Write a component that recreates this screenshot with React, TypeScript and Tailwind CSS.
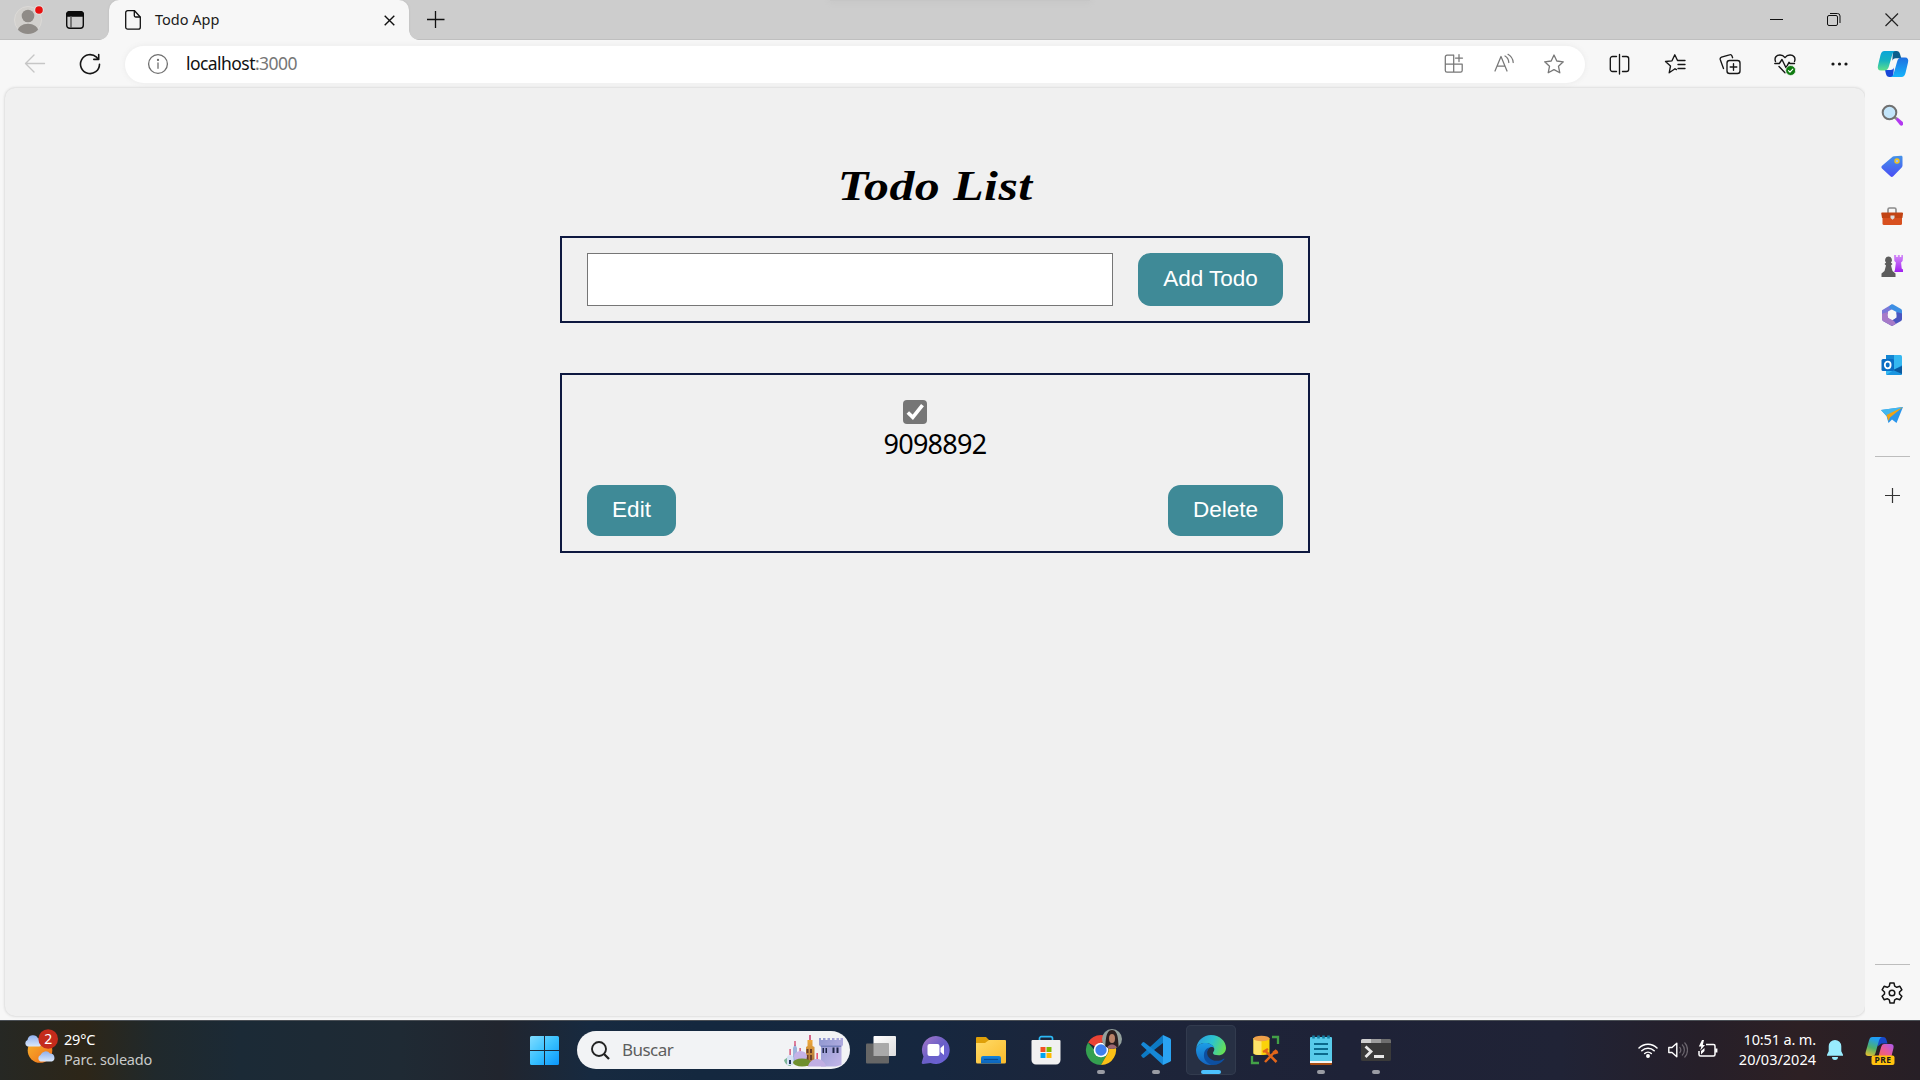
import { useState, type ReactNode } from "react";

const UI = "font-['Noto_Sans','Open_Sans',sans-serif]";

/* ---------- Title bar ---------- */

function TitleBar() {
  return (
    <header className="relative flex h-10 shrink-0 bg-[#cdcdcd] shadow-[inset_0_-1px_0_#bfbfbf]">
      <div className="absolute left-[830px] top-0 h-px w-[260px] bg-[#c6c6c6] shadow-[0_1px_5px_1px_#c5c5c5]" />
      <svg className="ml-[14px] mt-[4px] h-8 w-8" viewBox="0 0 32 32">
        <defs>
          <clipPath id="avatar">
            <circle cx="14" cy="16" r="14" />
          </clipPath>
        </defs>
        <circle cx="14" cy="16" r="13.5" fill="#d2d0cd" stroke="#dcdad7" />
        <g clipPath="url(#avatar)" fill="#8f8b87">
          <circle cx="14" cy="12" r="6.3" />
          <ellipse cx="14" cy="27" rx="10.5" ry="7.2" />
        </g>
        <circle cx="25" cy="6" r="4.8" fill="#e4dedc" />
        <circle cx="25" cy="6" r="3.8" fill="#e81010" />
      </svg>
      <svg className="ml-5 mt-[11px] h-[18px] w-[18px]" viewBox="0 0 18 18" fill="none" stroke="#0c0c0c" strokeWidth="1.4">
        <rect x=".7" y=".7" width="16.6" height="16.6" rx="3" />
        <path d="M.7 5V3.4A2.7 2.7 0 0 1 3.4.7h11.2a2.7 2.7 0 0 1 2.7 2.7V5z" fill="#0c0c0c" />
        <path d="M5 5v12" stroke="#555" />
      </svg>
      <div className="relative ml-[25px] flex w-[300px] rounded-t-[10px] bg-[#f7f7f7] shadow-[0_0_2px_#b5b5b5] [clip-path:inset(-2px_-12px_0_-12px)]">
        <span className="absolute -left-[10px] bottom-0 size-[10px] bg-[radial-gradient(circle_at_0_0,transparent_9.5px,#f7f7f7_10.2px)]" />
        <span className="absolute -right-[10px] bottom-0 size-[10px] bg-[radial-gradient(circle_at_100%_0,transparent_9.5px,#f7f7f7_10.2px)]" />
        <svg className="ml-4 mt-[10px] h-5 w-4" viewBox="0 0 16 20" fill="none" stroke="#111" strokeWidth="1.3">
          <path d="M2.7.7h6.8L15.3 7v10.2a2 2 0 0 1-2 2H2.7a2 2 0 0 1-2-2V2.7a2 2 0 0 1 2-2z" />
          <path d="M9.3.7V5.500a1.500 1.500 0 0 0 1.500 1.500h4.500" />
        </svg>
        <span className={`${UI} ml-[14px] mt-[9px] text-[14.5px] leading-[21px] text-[#1b1b1b]`}>Todo App</span>
        <svg className="ml-auto mr-[14px] mt-[15px] h-[11px] w-[11px]" viewBox="0 0 11 11" stroke="#111" strokeWidth="1.4">
          <path d="M.7.7l9.600 9.600M10.300.7.7 10.300" />
        </svg>
      </div>
      <svg className="ml-[18px] mt-[11px] h-[18px] w-[18px]" viewBox="0 0 18 18" stroke="#111" strokeWidth="1.3">
        <path d="M8.500 0v17M0 8.500h17.500" />
      </svg>
      <div className="ml-auto mr-[21px] mt-[13px] flex gap-[44px]">
        <svg className="h-[14px] w-[14px]" viewBox="0 0 14 14"><path d="M1 6.500h13" stroke="#111" /></svg>
        <svg className="h-[14px] w-[14px]" viewBox="0 0 14 14" fill="none" stroke="#111">
          <rect x=".5" y="2.500" width="10" height="10" rx="1.500" />
          <path d="M3 .5h7.500a2.500 2.500 0 0 1 2.500 2.500v7" />
        </svg>
        <svg className="h-[14px] w-[14px]" viewBox="0 0 14 14" stroke="#222" strokeWidth="1.200"><path d="M.5.5l12.500 12.500M13 .5.5 13" /></svg>
      </div>
    </header>
  );
}

/* ---------- Toolbar ---------- */

function Slot({ children, className }: { children: ReactNode; className: string }) {
  return <div className={`flex shrink-0 items-center justify-center ${className}`}>{children}</div>;
}

function Line({ children, color = "#161616", width = 1.35 }: { children: ReactNode; color?: string; width?: number }) {
  return (
    <svg className="size-[22px]" viewBox="0 0 22 22" fill="none" stroke={color} strokeWidth={width} strokeLinecap="round" strokeLinejoin="round">
      {children}
    </svg>
  );
}

function CopilotLogo() {
  return (
    <svg className="h-[28px] w-[32px]" viewBox="0 0 32 28">
      <defs>
        <linearGradient id="cpA" x1="0" y1="0" x2="0" y2="1">
          <stop offset="0" stopColor="#0aa5d8" />
          <stop offset=".5" stopColor="#17b3c0" />
          <stop offset="1" stopColor="#5fe08a" />
        </linearGradient>
        <linearGradient id="cpB" x1="0" y1="0" x2="0" y2="1">
          <stop offset="0" stopColor="#1f6fe0" />
          <stop offset="1" stopColor="#16b4fb" />
        </linearGradient>
      </defs>
      <path d="M16 1h3.500c2 0 3 1.200 3.500 3l1.300 4.200h-5.500c-2 0-3 1-3.500 2.500z" fill="#0c5f8c" />
      <path d="M16 27h-3.500c-2 0-3-1.200-3.500-3L8 20h5.500c2 0 3-1 3.500-2.500z" fill="#1747d8" />
      <path d="M7.500 1H19c-2 0-3 1.200-3.700 3.500L12 16c-.8 2.800-2 4.500-4.500 4.500H4c-2.800 0-3.800-2-3-5L3.500 5C4.300 2.200 5.300 1 7.500 1z" fill="url(#cpA)" />
      <path d="M24.500 27H13c2 0 3-1.200 3.700-3.500L20 12c.8-2.800 2-4.500 4.500-4.500H28c2.800 0 3.800 2 3 5L28.500 23c-.8 2.800-1.800 4-4 4z" fill="url(#cpB)" />
    </svg>
  );
}

function Toolbar() {
  return (
    <div className="flex h-12 shrink-0 items-center bg-[#f7f7f7] pl-[10px]">
      <Slot className="w-[50px]">
        <Line color="#c6c6c6"><path d="M20.500 10.500H1.500M10 2 1.500 10.500l8.500 8.500" /></Line>
      </Slot>
      <Slot className="w-[60px]">
        <Line width={1.6}><path d="M20.500 11.200a9.500 9.500 0 1 1-3-7l2 2M19.700 1.500v4.900h-4.900" /></Line>
      </Slot>
      <div className="ml-[5px] flex h-[37px] w-[1460px] items-center rounded-full bg-white pl-3 pr-[6px] shadow-[0_0_5px_1px_#ededed]">
        <Slot className="w-[42px]">
          <Line color="#6f6f6f" width={1.3}>
            <circle cx="11" cy="11" r="9.400" />
            <path d="M11 10v5.300" />
            <circle cx="11" cy="6.900" r=".5" fill="#6f6f6f" />
          </Line>
        </Slot>
        <span className={`${UI} mb-[2px] ml-[7px] text-[17.5px] tracking-[-0.56px] text-[#111]`}>
          localhost<span className="text-[#767676]">:3000</span>
        </span>
        <div className="ml-auto flex">
          <Slot className="w-[50px]">
            <Line color="#777" width={1.250}>
              <path d="M10.500 2.200H4A1.700 1.700 0 0 0 2.300 3.900v13.500a1.700 1.700 0 0 0 1.700 1.700h13.500a1.700 1.700 0 0 0 1.700-1.700v-6.200H2.300M10.700 2.200v16.800M16 1.500v7M12.500 5h7" />
            </Line>
          </Slot>
          <Slot className="w-[50px]">
            <Line color="#777" width={1.250}>
              <path d="M2 18 8 3.500 14 18M4 13h8M12 3c2.300 1.300 3.600 3.500 3.800 6.500M15 1.300c3.300 2 5 4.700 5.200 8.200" />
            </Line>
          </Slot>
          <Slot className="w-[50px]">
            <Line color="#777" width={1.300}>
              <path d="M11 2l2.800 6 6.500.8-4.800 4.500 1.300 6.500L11 16.600l-5.800 3.200 1.300-6.500L1.700 8.800 8.200 8z" />
            </Line>
          </Slot>
        </div>
      </div>
      <div className="ml-[7px] flex">
        <Slot className="w-[55px]">
          <Line><path d="M10.500 1.500v19.500M7.500 3.500h-4A2.200 2.200 0 0 0 1.300 5.700v10.600a2.200 2.200 0 0 0 2.200 2.200h4M13.500 3.500h4a2.200 2.200 0 0 1 2.200 2.200v10.600a2.200 2.200 0 0 1-2.200 2.200h-4" /></Line>
        </Slot>
        <Slot className="w-[55px]">
          <Line><path d="M11 15.800 5.200 19.800 6.500 13 1.500 8.500 8 7.800 10.800 1.800 13.500 7.500M14 7.500h7M14 11.500h7M14 15.500h7M11 15.800l1.500.8" /></Line>
        </Slot>
        <Slot className="w-[55px]">
          <Line>
            <rect x="8" y="7.500" width="13" height="13" rx="2.500" />
            <path d="M14.500 10.700v6.600M11.200 14h6.600M4.500 15.500 1.300 6.700A2 2 0 0 1 2.500 4.200L10.500 1.800a2 2 0 0 1 2.500 1.200l.6 1.700" />
          </Line>
        </Slot>
        <Slot className="w-[55px]">
          <svg className="size-[24px]" viewBox="0 0 24 24" fill="none" stroke="#161616" strokeWidth="1.400" strokeLinecap="round" strokeLinejoin="round">
            <path d="M2.500 9.500C1 5.500 3.500 3 7 3c2.200 0 3.800 1 5 2.600C13.200 4 14.800 3 17 3c3.500 0 6 2.500 4.500 6.500M6 14.500l6 6.200" />
            <path d="M1.800 11.500h4.500l2.700-4 4 8.300 3-5.500 1 1.200h4.500" />
            <circle cx="17.700" cy="18.500" r="5" fill="#0f7b10" stroke="#f7f7f7" strokeWidth=".7" />
            <path d="M15.500 18.600l1.500 1.500 2.800-3" stroke="#fff" strokeWidth="1.200" />
          </svg>
        </Slot>
        <Slot className="w-[55px]">
          <svg className="h-1 w-[17px]" viewBox="0 0 17 4" fill="#161616">
            <circle cx="2" cy="2" r="1.600" /><circle cx="8.500" cy="2" r="1.600" /><circle cx="15" cy="2" r="1.600" />
          </svg>
        </Slot>
      </div>
      <Slot className="w-[52px]"><CopilotLogo /></Slot>
    </div>
  );
}

/* ---------- Edge sidebar ---------- */

const sidebarIcons: ReactNode[] = [
  <g key="search">
    <path d="M14.500 15.500l2-2 5.300 4.500a2 2 0 0 1-2.900 2.900z" fill="#b238f0" />
    <path d="M12.500 14l2-2 2 2-1.700 1.700z" fill="#888" />
    <circle cx="8.500" cy="8.500" r="6.800" fill="#c3e5fa" stroke="#707070" strokeWidth="2" />
  </g>,
  <g key="tag">
    <path d="M11 2.300a3 3 0 0 1 2-1L20 .8c.8 0 1.500.5 1.500 1.300v8.400a3 3 0 0 1-.8 2l-8.500 8.700a2 2 0 0 1-2.800 0L1 13.400a2 2 0 0 1 0-2.700z" fill="url(#sbTag)" />
    <circle cx="16" cy="6" r="2" fill="#9cc0ff" stroke="#f5c518" strokeWidth="1.400" />
  </g>,
  <g key="toolbox">
    <path d="M7 8V4.500a1.500 1.500 0 0 1 1.500-1.500h5A1.500 1.500 0 0 1 15 4.500V8" fill="none" stroke="#8b8b8b" strokeWidth="1.600" />
    <rect x="1.500" y="10" width="19.500" height="10" rx="1.500" fill="#d8501f" />
    <path d="M1.500 7.500h19.500a1 1 0 0 1 1 1.200l-.6 4.300H1L.3 8.700a1 1 0 0 1 1.200-1.200z" fill="#c24415" />
    <path d="M9.500 10.500h4V13l-2 1.800-2-1.800z" fill="#ddd" />
  </g>,
  <g key="chess">
    <path d="M13 0h2.200v2h1.600V0h2v2h1.500V0h2l-.7 6-1.500 1.500.6 6 1.800 1.500v2h-9.200l.6-2 1-7.500-1.500-1.500z" fill="url(#sbRook)" />
    <path d="M7.500 1.500a3.500 3.500 0 0 1 2.400 6L11.500 9 10 10.500l1.500 5.500 3 2.500V22H.5v-3.500L3.500 16 5 10.500 3.500 9l1.600-1.500a3.500 3.500 0 0 1 2.400-6z" fill="#5c5c5c" />
  </g>,
  <g key="m365">
    <path d="M1 6.200 10.500.5 15 3 7 7.500v6l-5 3.500c-.7-.5-1-1-1-1.800z" fill="#7a78d8" />
    <path d="M10.500.5a2 2 0 0 1 1.700.1L20 5a2 2 0 0 1 1 1.800v7.500l-5.500-3V8L9 4.500c-1.500-.8-.8-2.800 1.500-4z" fill="#3d8fe4" />
    <path d="M21 9.500v5.800a2 2 0 0 1-1 1.700l-8 4.600a2 2 0 0 1-2 0L2 17l9-.5 4.500-3V8z" fill="#4a55c0" />
    <path d="M1 15.500V9.700L7 8v5.500l6 3.500 2 2.800-3 1.700a2 2 0 0 1-2 0L2 17z" fill="#a67ac8" />
    <circle cx="11" cy="11" r="4.300" fill="#f7f7f7" />
  </g>,
  <g key="outlook">
    <rect x="5" y="1" width="16" height="20" rx="1.500" fill="#35b8f1" />
    <path d="M5 1h8v9H5z" fill="#1486d2" />
    <path d="M5 21 21 11v8.500a1.500 1.500 0 0 1-1.500 1.500z" fill="#1b95e0" />
    <path d="M12 16l9-4v8z" fill="#0a5aa0" />
    <rect x=".5" y="5" width="12.500" height="12" rx="1.500" fill="#0a6dc4" />
    <ellipse cx="6.700" cy="11" rx="2.900" ry="3.300" fill="none" stroke="#fff" strokeWidth="1.800" />
  </g>,
  <g key="drop">
    <path d="M0 6 22 3 15.500 19 11 15.500 7.500 19 5.500 12z" fill="#2a96ec" />
    <path d="M22 3 0 6 5.500 12z" fill="#43b7ee" />
    <path d="M22 3 5.500 11 7.500 17l1.500-3.500z" fill="#f0a416" />
  </g>,
];

function Sidebar() {
  return (
    <aside className="flex w-[55px] shrink-0 flex-col items-center bg-[#f7f7f7] pr-px">
      <svg className="absolute size-0">
        <defs>
          <linearGradient id="sbTag" x1="0" y1="0" x2="0" y2="1"><stop offset="0" stopColor="#4593e8" /><stop offset="1" stopColor="#4a4ef5" /></linearGradient>
          <linearGradient id="sbRook" x1="0" y1="0" x2="0" y2="1"><stop offset="0" stopColor="#d48cf8" /><stop offset="1" stopColor="#a020f0" /></linearGradient>
        </defs>
      </svg>
      {sidebarIcons.map((icon, i) => (
        <Slot key={i} className={i === 0 ? "h-[53px]" : i === 3 ? "h-[49px]" : "h-[50px]"}>
          <svg className="size-[22px]" viewBox="0 0 22 22">{icon}</svg>
        </Slot>
      ))}
      <div className="mt-4 h-px w-[35px] bg-[#bdbdbd]" />
      <svg className="mt-[31px] size-[15px]" viewBox="0 0 15 15" stroke="#333" strokeWidth="1.200"><path d="M7.500 0v15M0 7.500h15" /></svg>
      <div className="mt-auto h-px w-[35px] bg-[#bdbdbd]" />
      <svg className="mb-4 mt-[17px] size-[22px]" viewBox="0 0 22 22" fill="none" stroke="#141414" strokeWidth="1.500" strokeLinejoin="round">
        <path d="M9 1h4l.7 3.200 2 1.100 3.200-1 2 3.500L18.500 10v2l2.400 2.200-2 3.500-3.200-1-2 1.100L13 21H9l-.7-3.200-2-1.100-3.200 1-2-3.500L3.500 12v-2L1.100 7.800l2-3.500 3.200 1 2-1.100z" />
        <circle cx="11" cy="11" r="2.800" />
      </svg>
    </aside>
  );
}

/* ---------- Todo page ---------- */

function ActionButton({ children, className, onClick }: { children: ReactNode; className: string; onClick?: () => void }) {
  return (
    <button
      type="button"
      onClick={onClick}
      className={`shrink-0 rounded-[12.5px] bg-[#3f8a97] text-center align-top font-['Liberation_Sans',Arial,sans-serif] text-[22.5px] text-white ${className}`}
    >
      {children}
    </button>
  );
}

function TodoPage() {
  const [draft, setDraft] = useState("");
  const [done, setDone] = useState(true);
  return (
    <main className="mb-1 ml-[5px] flex flex-1 flex-col items-center rounded-[10px] bg-[#f0f0f0] shadow-[0_0_3px_#c4c4c4]">
      <h1 className="mt-[71px] h-[61px] origin-center scale-x-[1.2] whitespace-nowrap font-['Liberation_Serif',serif] text-[41.5px] font-bold italic leading-[54px] tracking-[0.4px] text-black">
        Todo List
      </h1>
      <section className="mt-4 flex h-[87px] w-[750px] justify-between border-2 border-[#0e1840] px-[25px] pt-[15px]">
        <input
          value={draft}
          onChange={(e) => setDraft(e.target.value)}
          className="h-[53px] w-[526px] border border-[#767676] bg-white px-3 text-[22px] outline-none"
        />
        <ActionButton className="h-[53px] w-[145px] pb-[2px]">Add Todo</ActionButton>
      </section>
      <section className="mt-[50px] flex h-[180px] w-[750px] flex-col items-center border-2 border-[#0e1840] px-[25px] pt-[25px]">
        <button type="button" onClick={() => setDone(!done)} className="mr-10 size-6 shrink-0 rounded-[4px] bg-[#767676]">
          {done && (
            <svg className="size-6" viewBox="0 0 24 24" fill="none" stroke="#fff" strokeWidth="3.700">
              <path d="M4.800 12.500 9.800 17.300 19.500 5.200" />
            </svg>
          )}
        </button>
        <p className={`${UI} mt-[1px] text-[27px] leading-[38px] tracking-[-0.7px] text-black`}>9098892</p>
        <div className="mt-[22px] flex w-full justify-between">
          <ActionButton className="h-[51px] w-[89px] pb-[2px]">Edit</ActionButton>
          <ActionButton className="h-[51px] w-[115px] pb-[2px]">Delete</ActionButton>
        </div>
      </section>
    </main>
  );
}

/* ---------- Taskbar ---------- */

function Weather() {
  return (
    <svg className="mb-[9px] h-[34px] w-[34px]" viewBox="0 0 34 34">
      <defs>
        <linearGradient id="sun" x1="0" y1="0" x2="1" y2="1"><stop offset="0" stopColor="#f8b62d" /><stop offset="1" stopColor="#ef6c1a" /></linearGradient>
        <linearGradient id="cloud" x1="0" y1="0" x2="0" y2="1"><stop offset="0" stopColor="#8fb0ee" /><stop offset="1" stopColor="#dbe8fb" /></linearGradient>
      </defs>
      <circle cx="16" cy="21.500" r="12.300" fill="url(#sun)" />
      <path d="M3.500 17.500a3.500 3.500 0 0 1 0-6.500A5.500 5.500 0 0 1 14 9.500c3 0 5 8 1 8z" fill="url(#cloud)" />
      <path d="M16.500 32.500a3.500 3.500 0 0 1 0-6.500 5.500 5.500 0 0 1 9.500-1.500 4.200 4.200 0 0 1 2 8z" fill="url(#cloud)" />
      <circle cx="24.200" cy="10" r="9.800" fill="#c42b1c" />
      <text x="24.200" y="15" textAnchor="middle" fontSize="14" fill="#fff" fontFamily="Noto Sans, sans-serif">2</text>
    </svg>
  );
}

function Castle() {
  return (
    <svg className="h-[33px] w-[59px]" viewBox="0 0 59 33">
      <defs>
        <linearGradient id="tower" x1="0" y1="0" x2="1" y2="1"><stop offset="0" stopColor="#8e97cf" /><stop offset="1" stopColor="#c6b8ea" /></linearGradient>
        <linearGradient id="gold" x1="0" y1="0" x2="0" y2="1"><stop offset="0" stopColor="#f0a93a" /><stop offset="1" stopColor="#9b6a3d" /></linearGradient>
      </defs>
      <path d="M35 4h2v2h2V4h2.500v2h2V4H46v2h2V4h2.500v2h2V4H55v2h1.500V4H59v7l-1.500 2v18L52 32.500H37V13l-2-2z" fill="url(#tower)" />
      <path d="M37 11.500h20v1.500H37z" fill="#7681bd" />
      <path d="M38.500 14H40v5h-1.500zM41.500 14H43v5h-1.500zM48.500 13.500h2v5.500h-2zM52.500 13.500h2v5.500h-2z" fill="#1d2447" />
      <path d="M23.500 6h5v6l2 1v19H22V13l1.500-1z" fill="url(#gold)" />
      <path d="M25.300 1h1.400v5h-1.400z" fill="#c8285a" />
      <path d="M22.500 15h2v4h-2zM26 15h2v4h-2zM22.500 21h2v5h-2zM26 21h2v5h-2z" fill="#6a3f2a" />
      <path d="M9 14l2-4 2 4v14H9z" fill="#9db4dc" />
      <path d="M10.400 7h1.200v5h-1.200zM5.500 15h1.200v6H5.500zM15.500 14h1.200v5h-1.200z" fill="#d2325f" />
      <path d="M0 26l4-3 3 9c-3 0-6-2-7-6z" fill="#7fb69a" />
      <ellipse cx="16.500" cy="22.500" rx="6.500" ry="5.500" fill="#c5b2e6" />
      <path d="M3 24c0-4 6-4 6.500 0v7H3z" fill="#d6e2f4" />
      <path d="M5 26h2v4H5z" fill="#22305a" />
      <ellipse cx="18" cy="28.500" rx="9" ry="4" fill="#6f8f2e" />
      <path d="M32.500 19h1.300v8h-1.300z" fill="#e2315a" />
      <path d="M24 32.500c1-5 5-7.500 9-7.500s8 2.500 9 7.500z" fill="#c0aee2" />
    </svg>
  );
}

function AppIcon({ children, running, active }: { children: ReactNode; running?: boolean; active?: boolean }) {
  return (
    <div className="flex h-[60px] w-[55px] items-center justify-center">
      <div className={`relative flex size-[50px] items-center justify-center rounded-[5px] ${active ? "bg-[#273044] ring-1 ring-inset ring-[#323b4e]" : ""}`}>
        <svg className="size-[30px] overflow-visible" viewBox="0 0 30 30">{children}</svg>
        {running && <span className="absolute bottom-[1px] h-1 w-2 rounded-full bg-[#9a9ca4]" />}
        {active && <span className="absolute bottom-[1px] h-1 w-5 rounded-full bg-[#4cc2ff]" />}
      </div>
    </div>
  );
}

function Taskbar() {
  return (
    <footer
      className={`${UI} flex h-[60px] shrink-0 items-center bg-[linear-gradient(90deg,#262824_0px,#2d2618_85px,#20292c_155px,#1b2a36_240px,#1f2a34_400px,#21252e_500px,#172a40_590px,#14283f_700px,#16273f_930px,#1d253a_1100px,#1e2237_1350px,#202336_1560px,#261f29_1700px,#2d2024_1800px,#271f26_1920px)] shadow-[inset_0_1px_0_#4a4f55]`}
    >
      <div className="flex w-[530px] shrink-0 items-center pl-6">
        <Weather />
        <div className="mb-[2px] ml-[6px] text-[14.5px] leading-5 tracking-[-0.2px]">
          <div className="text-white">29°C</div>
          <div className="text-[#c9cac9]">Parc. soleado</div>
        </div>
      </div>
      <svg className="size-[29px] shrink-0" viewBox="0 0 29 29">
        <defs>
          <linearGradient id="win" x1="0" y1="0" x2="1" y2="1"><stop offset="0" stopColor="#80dcff" /><stop offset=".5" stopColor="#39c1ff" /><stop offset="1" stopColor="#0a96fb" /></linearGradient>
        </defs>
        <path d="M1.500 0H14v14H0V1.500A1.500 1.500 0 0 1 1.500 0zM15 0h12.500A1.500 1.500 0 0 1 29 1.500V14H15zM0 15h14v14H1.500A1.500 1.500 0 0 1 0 27.500zM15 15h14v12.500a1.500 1.500 0 0 1-1.500 1.500H15z" fill="url(#win)" />
      </svg>
      <div className="ml-[18px] flex h-[38px] w-[273px] shrink-0 items-center rounded-full bg-[#f2f3f5] pl-[14px] pr-[7px]">
        <svg className="size-[19px]" viewBox="0 0 19 19" fill="none" stroke="#222" strokeWidth="1.900">
          <circle cx="8" cy="8" r="7" /><path d="M13 13l5 5" strokeWidth="2.300" />
        </svg>
        <span className="ml-3 text-[17px] tracking-[-0.55px] text-[#5d5d5d]">Buscar</span>
        <div className="ml-auto"><Castle /></div>
      </div>
      <nav className="ml-[3.5px] flex shrink-0">
        <AppIcon>
          <defs><linearGradient id="tv" x1="0" y1="0" x2="1" y2="1"><stop offset="0" stopColor="#fff" /><stop offset="1" stopColor="#ddd" /></linearGradient></defs>
          <rect x="7.500" y="1" width="22.500" height="20" rx="1" fill="url(#tv)" />
          <rect x="0" y="8.500" width="23" height="20" rx="1" fill="#666" />
          <path d="M7.500 8.500H23v12.500H7.500z" fill="#a9a9a9" />
        </AppIcon>
        <AppIcon>
          <defs><linearGradient id="chat" x1="0" y1="0" x2="1" y2="1"><stop offset="0" stopColor="#a878c8" /><stop offset=".5" stopColor="#6a5fc7" /><stop offset="1" stopColor="#6a62d8" /></linearGradient></defs>
          <path d="M15 1a14 14 0 1 1-5.500 27L2 29c-1 0-1.500-.8-1.200-1.700L2.500 21.500A14 14 0 0 1 15 1z" fill="url(#chat)" />
          <rect x="6.500" y="9" width="12" height="12" rx="2" fill="#fff" />
          <path d="M19.500 13l3.500-3v10l-3.500-3z" fill="#fff" />
        </AppIcon>
        <AppIcon>
          <defs>
            <linearGradient id="fold" x1="0" y1="0" x2="1" y2="1"><stop offset="0" stopColor="#ffdb68" /><stop offset="1" stopColor="#fbbb2b" /></linearGradient>
            <linearGradient id="fold2" x1="0" y1="0" x2="0" y2="1"><stop offset="0" stopColor="#1484dc" /><stop offset="1" stopColor="#0c62b8" /></linearGradient>
          </defs>
          <path d="M0 3a1 1 0 0 1 1-1h9l3 3v3H0z" fill="#dfa009" />
          <path d="M0 8h9l4-3h16a1 1 0 0 1 1 1v21a1.500 1.500 0 0 1-1.500 1.500h-27A1.500 1.500 0 0 1 0 27z" fill="url(#fold)" />
          <path d="M5 28.500V23a2 2 0 0 1 2-2h16a2 2 0 0 1 2 2v5.500z" fill="url(#fold2)" />
          <path d="M8 24.500h14" stroke="#0a4c94" strokeWidth="1.200" />
        </AppIcon>
        <AppIcon>
          <path d="M8.500 6V3.500A1.800 1.800 0 0 1 10.300 1.700h9.400a1.800 1.800 0 0 1 1.800 1.800V6" fill="none" stroke="#2cb8f4" strokeWidth="1.700" />
          <path d="M.5 6a1 1 0 0 1 1-1h27a1 1 0 0 1 1 1v19a4.500 4.500 0 0 1-4.500 4.500H5A4.500 4.500 0 0 1 .5 25z" fill="#f1f1f1" />
          <path d="M9.500 12h5v5h-5z" fill="#f25022" /><path d="M15.500 12h5v5h-5z" fill="#7fba00" />
          <path d="M9.500 18h5v5h-5z" fill="#00a4ef" /><path d="M15.500 18h5v5h-5z" fill="#ffb900" />
        </AppIcon>
        <AppIcon running>
          <path d="M15 15 2 7.500A15 15 0 0 1 28 7.500L15 7.500z" fill="#ea4335" />
          <path d="M2 7.500A15 15 0 0 0 15 30l6.500-11.200L15 15H8.500z" fill="#34a050" />
          <path d="M28 7.500A15 15 0 0 1 15 30l6.500-11.200A7.500 7.500 0 0 0 15 7.500z" fill="#fbc116" />
          <circle cx="15" cy="15" r="7.300" fill="#fff" />
          <circle cx="15" cy="15" r="5.700" fill="#3f7fee" />
          <clipPath id="photo"><circle cx="26" cy="4" r="10" /></clipPath>
          <g clipPath="url(#photo)">
            <path d="M16-6h20v20H16z" fill="#93a09c" />
            <path d="M19 14c1-6 0-19 7-19s6 13 7 19z" fill="#2a1f20" />
            <ellipse cx="26" cy="3.500" rx="3" ry="4.500" fill="#b98268" />
            <path d="M21 14c0-6 10-6 10 0z" fill="#9c6670" />
          </g>
        </AppIcon>
        <AppIcon running>
          <path d="M22 0v8L3.500 22.500a1.500 1.500 0 0 1-2 0L.5 21.300a1 1 0 0 1 0-1.500z" fill="#0d7ac4" />
          <path d="M22 30v-8L3.500 7.500a1.500 1.500 0 0 0-2 0L.5 8.700a1 1 0 0 0 0 1.500z" fill="#1688d6" />
          <path d="M22 0l7 3.200a2 2 0 0 1 1 1.600v20.400a2 2 0 0 1-1 1.600L22 30z" fill="#2aa3f2" />
        </AppIcon>
        <AppIcon active>
          <defs>
            <linearGradient id="eg1" x1="0" y1=".3" x2="1" y2=".6"><stop offset="0" stopColor="#2a9fe0" /><stop offset=".5" stopColor="#2cc3cf" /><stop offset="1" stopColor="#68e052" /></linearGradient>
            <linearGradient id="eg2" x1="0" y1="0" x2="0" y2="1"><stop offset="0" stopColor="#1c9de6" /><stop offset="1" stopColor="#1464c0" /></linearGradient>
          </defs>
          <path d="M.3 13C1.300 5.500 7.500 0 15 0c8.500 0 15 6 15 13 0 4.500-3.500 7.300-7.500 7.300-3.500 0-5.500-1-5.500-2.300 0-1 1.300-1.500 1.300-3.700C18.300 11 14 8 9.500 8 5 8 1.500 10 .3 13z" fill="url(#eg1)" />
          <path d="M.3 13C1.500 10 5 8 9.500 8c4.500 0 8 2.500 8.800 5-1.200-1.300-3-1.300-4-.8C8.500 15 9 25 18 29.700 9 31.500 0 25 0 15z" fill="url(#eg2)" />
          <path d="M14.300 12.200C11 14 10 19 13 22.500c3.500 4 9.500 4.500 14.700 1.200.6-.4 1 .1.700.6A15 15 0 0 1 15 30C9 27 7.500 23 8 19c.5-4 3-6.500 6.300-6.800z" fill="#0d4fa0" />
        </AppIcon>
        <AppIcon>
          <path d="M2.500 3v15.500c1.500 2 13 2 16 0V3z" fill="#fbd20a" />
          <path d="M2.500 3v15.500c1 1 4 1.500 8 1.500V3z" fill="#fde36a" />
          <ellipse cx="10.500" cy="3.500" rx="8" ry="2.800" fill="#eda04a" />
          <path d="M21 2h6v7M1 21v7h7" fill="none" stroke="#43a047" strokeWidth="2.300" />
          <path d="M14 27 25.500 15M25.500 27 14 15.500M12 17l5-3M22.500 16l1.500 2 3-1" fill="none" stroke="#e2661a" strokeWidth="2.500" />
        </AppIcon>
        <AppIcon running>
          <rect x="4" y="25" width="22" height="5" rx="1" fill="#a84d12" />
          <rect x="4" y="24.500" width="22" height="3.500" fill="#f4f4f4" />
          <path d="M4 3a1 1 0 0 1 1-1h20a1 1 0 0 1 1 1v23H4z" fill="#58cbea" />
          <path d="M8 9h14M8 14h14M8 19h14" stroke="#0b6a8c" strokeWidth="2" />
          <path d="M7.500.5v3M12.500.5v3M17.500.5v3M22.500.5v3" stroke="#157fa4" strokeWidth="2.600" />
        </AppIcon>
        <AppIcon running>
          <path d="M0 5.500A1.500 1.500 0 0 1 1.500 4h27A1.500 1.500 0 0 1 30 5.500v19a1.500 1.500 0 0 1-1.500 1.500h-27A1.500 1.500 0 0 1 0 24.500z" fill="#3a3a3a" />
          <path d="M0 8V5.500A1.500 1.500 0 0 1 1.500 4H10v4z" fill="#cfcfcf" /><path d="M10 4h10v4H10z" fill="#9d9d9d" />
          <path d="M20 4h8.500A1.500 1.500 0 0 1 30 5.500V8H20z" fill="#6e6e6e" />
          <path d="M4.500 11.500l5.500 5-5.500 5.500M13 21.500h10" fill="none" stroke="#e8e8e8" strokeWidth="2.800" />
        </AppIcon>
      </nav>
      <div className="ml-auto flex items-center pr-[25px]">
        <svg className="h-5 w-5" viewBox="0 0 20 20" fill="none" stroke="#fff" strokeWidth="1.500" strokeLinecap="round">
          <path d="M1 8a12.700 12.700 0 0 1 18 0M3.800 10.800a8.700 8.700 0 0 1 12.400 0M6.700 13.500a4.700 4.700 0 0 1 6.600 0" />
          <circle cx="10" cy="16" r="1.200" fill="#fff" />
        </svg>
        <svg className="ml-[10px] h-5 w-5" viewBox="0 0 20 20" fill="none" stroke="#fff" strokeWidth="1.400" strokeLinejoin="round">
          <path d="M.8 7.500H4L8.800 3.300v13.400L4 12.500H.8z" />
          <path d="M11.500 7a4.500 4.500 0 0 1 0 6M14 4.500a7.500 7.500 0 0 1 0 11M16.500 2.500c4 4 4 11 0 15" stroke="#6b666e" strokeWidth="1.200" />
        </svg>
        <svg className="ml-[10px] h-5 w-5" viewBox="0 0 20 20" fill="none" stroke="#fff" strokeWidth="1.500" strokeLinejoin="round">
          <path d="M8 4.500h7.500A1.500 1.500 0 0 1 17 6v8.500a1.500 1.500 0 0 1-1.500 1.500h-13A1.500 1.500 0 0 1 1 14.500V11" />
          <path d="M18.300 8.500v4" strokeWidth="2.200" />
          <path d="M4 0 .8 6.500h2.500l-1 4L7 5H4.800L6 0zM3 14.500V11l3.500-3v3z" fill="#fff" stroke="none" />
        </svg>
        <div className="mb-[2px] ml-[19px] w-[79px] whitespace-nowrap text-right text-[14.5px] leading-5 text-white">
          <div className="tracking-[-0.150px]">10:51 a. m.</div>
          <div>20/03/2024</div>
        </div>
        <svg className="ml-[10px] h-5 w-[18px]" viewBox="0 0 18 20" fill="#98ecfe">
          <path d="M9 0a6.300 6.300 0 0 1 6.300 6.300v5l1.700 3.500v1H1v-1l1.700-3.500v-5A6.300 6.300 0 0 1 9 0zM6 17h6a3 3 0 0 1-6 0z" />
        </svg>
        <svg className="ml-[21px] h-[30px] w-[30px]" viewBox="0 0 30 30">
          <defs>
            <linearGradient id="pa" x1=".3" y1="0" x2="0" y2="1"><stop offset="0" stopColor="#1f9ef5" /><stop offset=".5" stopColor="#4fb06a" /><stop offset="1" stopColor="#f5c02a" /></linearGradient>
            <linearGradient id="pb" x1="1" y1="0" x2="0" y2="1"><stop offset="0" stopColor="#a95bf0" /><stop offset=".5" stopColor="#e85a9a" /><stop offset="1" stopColor="#f56a4a" /></linearGradient>
          </defs>
          <path d="M13 2h5c2 0 3 1 3.500 3l1 3.500h-6l-4 3z" fill="#1748c8" />
          <path d="M7.500 2H17c-1.500.5-2.300 1.500-3 3.500L10.500 18c-.5 2-1.500 3-3.500 3H3.500C1 21 0 19.500.7 17L4 5.500C4.700 3 5.500 2 7.500 2z" fill="url(#pa)" />
          <path d="M19.500 9h6c2.500 0 3.500 1.500 3 4L26 23H13l3-10.500C16.700 10 17.500 9 19.500 9z" fill="url(#pb)" />
          <rect x="6.500" y="20.500" width="23" height="9.500" rx="2" fill="#ffc20e" />
          <text x="18" y="28.200" textAnchor="middle" fontSize="8.500" fontWeight="700" letterSpacing=".4" fill="#1a1a1a" fontFamily="Noto Sans, sans-serif">PRE</text>
        </svg>
      </div>
    </footer>
  );
}

export default function App() {
  return (
    <div className="flex h-[1080px] w-[1920px] flex-col overflow-hidden bg-[#f7f7f7]">
      <TitleBar />
      <Toolbar />
      <div className="flex min-h-0 flex-1">
        <TodoPage />
        <Sidebar />
      </div>
      <Taskbar />
    </div>
  );
}
